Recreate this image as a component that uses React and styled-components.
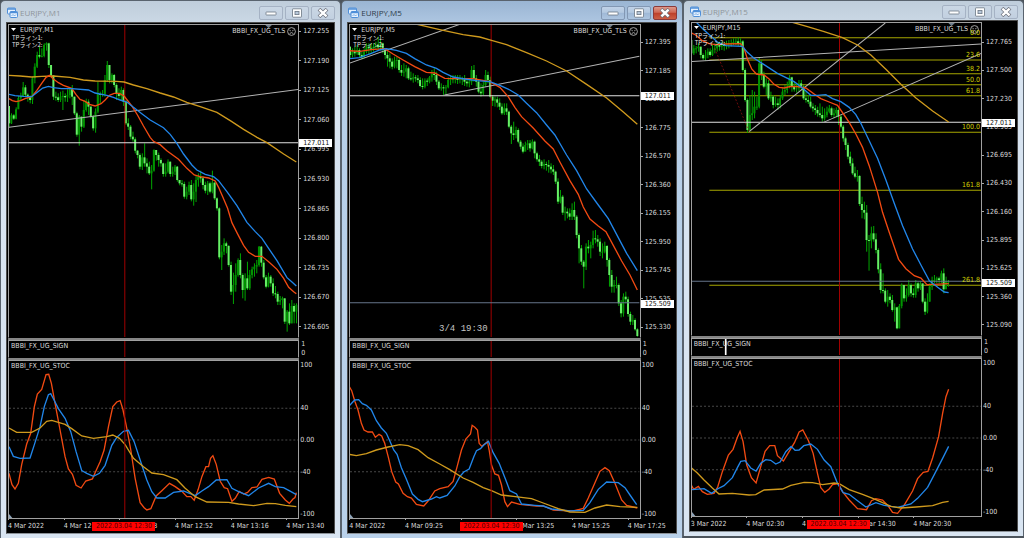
import React from 'react';
import styled, {createGlobalStyle} from 'styled-components';

const GlobalStyle = createGlobalStyle`
    * {
        box-sizing: border-box;
    }
    body {
        margin: 0;
        background: #4c545c;
        overflow: hidden;
    }
    h2, p {
        margin: 0;
        font-weight: normal;
    }
`

const Desktop = styled.main`
    display: flex;
    height: 100vh;
    font-family: "DejaVu Sans Condensed", "Noto Sans", "Noto Sans CJK JP", sans-serif;
    font-size: 7px;
    line-height: 10px;
    color: #dcdcdc;
`

const Window = styled.section`
    flex: 1;
    min-width: 0;
    display: flex;
    flex-direction: column;
    padding: 0 5px 4px;
    margin-bottom: ${({$raised}) => $raised ? 2 : 0}px;
    border: 1px solid #59636e;
    border-bottom: 0;
    border-radius: 5px 5px 0 0;
    background: ${({$active}) => $active
        ? 'linear-gradient(#9ab5d3, #b0c8e3 24px, #b7cfe8 70px, #b9d1ea)'
        : 'linear-gradient(#bfcddb, #ccd9e6 24px, #d7e3f0 70px, #d9e5f2)'};
`

const TitleBar = styled.header`
    flex: none;
    height: ${({$raised}) => $raised ? 19 : 21}px;
    padding: 2px 0 0 1px;
    display: flex;
    align-items: center;
    gap: 2px;

    h2 {
        flex: 1;
        font-family: "Open Sans", sans-serif;
        font-size: 8px;
        color: ${({$active}) => $active ? '#2f3c4a' : '#8f959b'};
    }
`

const WindowButtons = styled.div`
    display: flex;
    gap: 2px;
`

const WindowButton = styled.button`
    width: 24px;
    height: 14px;
    padding: 0;
    display: grid;
    place-items: center;
    border: 1px solid ${({$danger, $active}) => $danger ? '#8c3a3a' : $active ? '#8297b3' : '#a5b2c4'};
    border-radius: 2px;
    background: ${({$danger, $active}) => $danger
        ? 'linear-gradient(#dd9a8d, #cf6753 45%, #bd3f2a 50%, #cc5e44)'
        : $active
            ? 'linear-gradient(#c0d2e8, #b3c8e0 45%, #9fb8d6 50%, #adc5e0)'
            : 'linear-gradient(#cad7e5, #c2d0e0)'};
`

const Client = styled.div`
    flex: 1;
    min-height: 0;
    display: grid;
    grid-template-columns: minmax(0, 1fr) 35px;
    grid-template-rows: minmax(0, 314fr) 2px 18px 2px minmax(0, 159fr) 14px;
    padding: 1px 0 0 1px;
    border: 1px solid #4c4c4c;
    border-bottom-color: #8c9298;
    background: #000;
`

const Pane = styled.div`
    position: relative;
    min-height: 0;
    border: 1px solid #a0a0a0;
    border-bottom-color: ${({$last}) => $last ? '#a0a0a0' : '#000'};

    > svg {
        display: block;
        width: 100%;
        height: 100%;
    }
`

const Divider = styled.div`
    grid-column: 1;
    background: #858585;
`

const AxisGap = styled.div`
    grid-column: 2;
`

const PaneOverlay = styled.div`
    position: absolute;
    inset: 0 2px auto 2px;
    display: flex;
    align-items: flex-start;
    justify-content: space-between;
`

const Symbol = styled.div`
    p {
        padding-left: 1px;
        font-family: "Noto Sans CJK JP", sans-serif;
        font-size: 6px;
        line-height: 7px;
        color: #e4e4e4;
    }
`

const SymbolName = styled.div`
    display: flex;
    align-items: center;
    gap: 4px;
    height: 9px;
`

const Expert = styled.div`
    display: flex;
    align-items: center;
    gap: 2px;
    padding-top: 1px;
`

const StampNote = styled.span`
    position: absolute;
    right: 152px;
    bottom: 2px;
    font-family: "Liberation Mono", monospace;
    font-size: 9px;
    line-height: 12px;
    color: #c4c4c4;
`

const FibLabel = styled.span`
    position: absolute;
    right: 1px;
    top: ${({$top}) => $top}%;
    margin-top: -9px;
    line-height: 9px;
    color: #d2d200;
`

const PriceAxis = styled.div`
    position: relative;
    display: flex;
    flex-direction: column;
    justify-content: space-between;
    padding: ${({$pad}) => $pad} 0 6px;

    span {
        display: flex;
        align-items: center;
        gap: 2px;
        height: 10px;
    }
    span::before {
        content: "";
        width: 2px;
        height: 1px;
        background: #a8a8a8;
    }
`

const PriceTag = styled.strong`
    position: absolute;
    left: 0;
    right: 2px;
    top: ${({$top}) => $top}%;
    height: 8px;
    margin-top: -3px;
    padding-left: 4px;
    line-height: 8px;
    font-weight: normal;
    background: #fff;
    color: #111;
`

const SignAxis = styled.div`
    padding-left: 2px;
    line-height: 9px;
`

const LevelAxis = styled.div`
    display: flex;
    flex-direction: column;
    justify-content: space-between;
    padding-left: 1px;
`

const MidLevels = styled.div`
    display: flex;
    flex-direction: column;
    gap: 22px;
`

const TimeAxis = styled.div`
    position: relative;
    padding-right: 13px;
    display: grid;
    grid-template-columns: repeat(5, minmax(0, 1fr)) 0;
    white-space: nowrap;

    span {
        line-height: 13px;
    }
    span::before {
        content: "";
        display: block;
        width: 1px;
        height: 1px;
        background: #a8a8a8;
    }
`

const TimeTag = styled.strong`
    position: absolute;
    left: ${({$left}) => $left}%;
    top: 3px;
    width: 63px;
    height: 9px;
    line-height: 9px;
    text-align: center;
    font-weight: normal;
    background: #f00;
    color: #4a0000;
`

const RED = '#f24a12';
const BLUE = '#2186ea';
const GOLD = '#cf9a1d';
const CURSOR = '#a00000';

// every candle is [close, high, low]; it opens where the one before it closed
const M1 = [
    [370, 318, 382], [346, 340, 372], [356, 342, 360], [328, 322, 358], [294, 288, 326], [288, 278, 300],
    [262, 246, 290], [284, 255, 292], [292, 280, 305], [300, 286, 310], [235, 230, 312], [200, 190, 250],
    [165, 155, 204], [170, 140, 175], [168, 145, 172], [135, 130, 172], [130, 127, 152], [195, 128, 204],
    [226, 195, 232], [290, 226, 300], [292, 275, 302], [300, 280, 306], [290, 275, 306], [288, 272, 330],
    [292, 280, 305], [285, 268, 306], [268, 262, 295], [290, 255, 315], [340, 290, 345], [404, 335, 410],
    [350, 345, 437], [380, 350, 395], [330, 300, 384], [305, 296, 335], [320, 298, 345], [350, 318, 355],
    [385, 345, 392], [335, 325, 398], [282, 245, 340], [285, 275, 310], [282, 270, 290], [240, 225, 290],
    [195, 183, 245], [240, 195, 250], [225, 220, 250], [255, 222, 262], [280, 250, 300], [288, 265, 300],
    [270, 260, 300], [305, 265, 318], [370, 300, 375], [380, 355, 390], [410, 375, 418], [418, 395, 425],
    [452, 412, 460], [465, 450, 475], [500, 460, 508], [472, 460, 510], [490, 430, 500], [500, 475, 520],
    [520, 485, 525], [512, 495, 568], [450, 448, 515], [465, 450, 482], [480, 458, 500], [490, 475, 500],
    [522, 488, 530], [515, 490, 530], [485, 478, 520], [522, 485, 530], [515, 500, 530], [500, 495, 525],
    [540, 498, 545], [550, 540, 556], [552, 540, 560], [590, 545, 596], [575, 560, 598], [555, 545, 585],
    [598, 540, 604], [575, 550, 617], [540, 525, 606], [530, 520, 560], [535, 512, 548], [555, 528, 568],
    [572, 545, 580], [550, 543, 585], [575, 545, 580], [548, 512, 580], [595, 545, 600], [625, 592, 632],
    [772, 622, 778], [755, 735, 810], [730, 715, 765], [738, 725, 760], [795, 735, 800], [875, 785, 885],
    [855, 818, 912], [825, 790, 875], [780, 775, 830], [825, 760, 835], [870, 820, 895], [835, 820, 902],
    [865, 785, 870], [825, 810, 870], [808, 800, 835], [800, 790, 830], [795, 780, 820], [740, 738, 800],
    [788, 738, 800], [832, 780, 838], [860, 825, 865], [830, 818, 862], [850, 825, 860], [880, 835, 888],
    [882, 858, 895], [905, 875, 915], [900, 888, 915], [895, 890, 925], [965, 895, 972], [935, 930, 995],
    [970, 910, 975], [918, 900, 970], [935, 910, 970], [915, 910, 970],
];

const M5 = [
    [165, 140, 175], [155, 145, 172], [160, 140, 170], [150, 135, 165], [165, 145, 172], [172, 155, 178],
    [155, 145, 175], [140, 130, 160], [145, 130, 162], [150, 130, 160], [140, 130, 155], [135, 125, 150],
    [142, 110, 150], [130, 120, 150], [150, 128, 160], [165, 145, 178], [175, 150, 200], [185, 160, 205],
    [200, 175, 208], [182, 170, 205], [180, 170, 205], [210, 175, 218], [218, 195, 228], [215, 190, 230],
    [205, 195, 235], [235, 200, 240], [238, 215, 242], [232, 220, 248], [235, 225, 245], [240, 225, 250],
    [258, 232, 262], [260, 235, 268], [242, 235, 265], [245, 235, 258], [232, 228, 250], [222, 210, 245],
    [225, 205, 240], [245, 215, 255], [265, 240, 270], [262, 250, 272], [265, 255, 285], [262, 255, 283],
    [240, 232, 265], [235, 228, 255], [238, 225, 250], [235, 225, 250], [240, 225, 252], [235, 225, 250],
    [238, 230, 255], [245, 225, 258], [250, 235, 260], [245, 235, 262], [210, 198, 255], [235, 195, 245],
    [245, 225, 260], [275, 240, 280], [280, 250, 290], [255, 245, 285], [225, 210, 260], [240, 215, 250],
    [290, 230, 295], [302, 285, 318], [298, 290, 320], [308, 290, 322], [320, 295, 330], [340, 310, 345],
    [325, 310, 345], [335, 310, 345], [380, 332, 385], [400, 375, 432], [405, 365, 420], [390, 380, 415],
    [425, 385, 430], [440, 420, 448], [455, 430, 460], [435, 425, 452], [430, 420, 450], [445, 420, 455],
    [425, 418, 448], [460, 422, 475], [478, 455, 485], [485, 465, 498], [498, 480, 505], [492, 478, 508],
    [495, 485, 512], [500, 480, 518], [508, 490, 520], [515, 495, 525], [545, 512, 552], [605, 535, 612],
    [590, 570, 610], [638, 585, 645], [635, 620, 662], [640, 625, 655], [650, 625, 660], [630, 610, 660],
    [650, 605, 660], [705, 645, 715], [745, 700, 790], [785, 735, 795], [800, 780, 865], [740, 730, 810],
    [745, 720, 760], [735, 725, 775], [715, 692, 745], [718, 690, 730], [725, 705, 740], [755, 715, 768],
    [755, 730, 775], [738, 725, 760], [780, 735, 800], [825, 775, 860], [860, 810, 878], [855, 840, 878],
    [855, 830, 865], [910, 850, 918], [940, 900, 952], [890, 880, 950], [898, 875, 910], [942, 890, 950],
    [965, 935, 975], [960, 945, 975], [988, 955, 992], [1008, 985, 1010],
];

const M15 = [
    [160, 120, 170], [145, 135, 165], [145, 138, 160], [140, 130, 155], [165, 140, 175], [175, 160, 180],
    [165, 150, 182], [155, 145, 175], [165, 145, 170], [150, 135, 168], [145, 130, 160], [135, 125, 155],
    [140, 125, 152], [135, 125, 150], [138, 125, 152], [132, 122, 148], [130, 120, 145], [130, 118, 140],
    [126, 115, 135], [124, 115, 135], [130, 112, 138], [124, 115, 140], [210, 120, 215], [300, 205, 305],
    [390, 295, 398], [345, 285, 395], [340, 270, 360], [320, 275, 355], [320, 290, 330], [190, 172, 325],
    [225, 180, 240], [260, 215, 265], [250, 235, 285], [295, 240, 300], [290, 275, 305], [315, 285, 325],
    [310, 290, 320], [315, 295, 330], [295, 285, 325], [275, 265, 300], [270, 255, 285], [260, 245, 280],
    [232, 225, 265], [260, 230, 275], [268, 245, 275], [265, 250, 278], [250, 240, 275], [260, 240, 270],
    [295, 255, 300], [300, 275, 308], [305, 285, 312], [320, 290, 325], [325, 310, 335], [330, 315, 345],
    [340, 320, 350], [345, 310, 352], [355, 320, 365], [345, 325, 362], [335, 320, 352], [325, 315, 340],
    [345, 320, 350], [340, 325, 355], [330, 322, 352], [350, 325, 375], [380, 345, 385], [415, 375, 425],
    [435, 410, 450], [470, 428, 478], [490, 455, 498], [520, 475, 525], [530, 500, 535], [528, 510, 545],
    [612, 525, 618], [630, 590, 655], [638, 605, 658], [720, 615, 755], [722, 705, 812], [700, 680, 745],
    [718, 678, 725], [750, 700, 760], [808, 745, 820], [870, 790, 880], [872, 820, 880], [905, 865, 910],
    [890, 870, 920], [900, 880, 910], [930, 885, 935], [922, 910, 965], [985, 920, 988], [918, 912, 985],
    [855, 850, 925], [895, 855, 905], [885, 865, 905], [855, 840, 890], [880, 850, 890], [885, 865, 893],
    [850, 840, 893], [865, 845, 875], [850, 845, 870], [905, 852, 910], [935, 895, 945], [905, 880, 940],
    [860, 850, 905], [840, 830, 870], [840, 825, 850], [835, 830, 850], [840, 830, 850], [820, 812, 850],
    [868, 805, 880], [845, 830, 865], [845, 840, 860],
];

const charts = [
    {
        id: 'm1',
        title: 'EURJPY,M1',
        left: 27,
        top: 75,
        candleStart: 27,
        candles: M1,
        cursor: 374,
        lines: ['27,382 895,268'],
        levels: [{y: 428, label: '127.011', color: '#e0e0e0'}],
        averages: {
            gold: '27,226 60,228 95,231 125,229 160,228 210,232 250,240 285,243 350,244 372,246 400,255 440,266 480,279 520,291 560,307 600,320 650,337 690,362 730,388 770,412 800,428 850,462 888,486',
            red: '27,296 37,302 48,305 62,302 75,296 95,290 110,272 125,250 138,232 148,226 160,237 175,248 190,256 215,265 228,284 240,298 255,304 268,313 285,318 303,311 315,300 328,286 342,280 358,280 372,288 395,318 412,345 430,378 450,412 460,424 480,434 500,452 535,478 560,505 582,525 600,530 625,534 645,543 655,562 668,592 682,625 695,668 710,698 730,736 745,757 765,769 785,769 805,785 830,808 850,835 865,862 880,875 888,881',
            blue: '27,283 45,287 70,289 95,290 110,278 128,264 145,259 160,263 185,266 215,266 265,270 285,279 320,286 340,292 360,300 380,306 400,322 425,341 450,360 490,383 510,403 530,430 550,462 575,495 590,510 615,523 640,530 655,542 680,575 710,617 740,667 765,695 785,715 805,745 830,782 860,833 875,846 888,858',
        },
        axisPad: '2px',
        prices: ['127.255', '127.190', '127.125', '127.060', '126.995', '126.930', '126.865', '126.800', '126.735', '126.670', '126.605'],
        stoc: {
            red: '27,1420 36,1454 45,1467 55,1450 65,1394 80,1332 92,1300 103,1220 112,1182 125,1168 138,1124 146,1123 154,1150 165,1210 180,1290 195,1370 205,1407 217,1423 228,1456 243,1464 257,1443 277,1437 285,1418 300,1385 312,1350 325,1280 338,1220 350,1206 360,1202 368,1227 380,1285 392,1350 405,1435 420,1508 432,1523 440,1530 452,1526 468,1488 485,1472 508,1450 525,1460 545,1474 560,1490 572,1490 582,1501 594,1468 605,1430 617,1400 625,1400 631,1375 638,1367 648,1393 660,1444 672,1463 682,1466 695,1504 705,1495 717,1474 730,1482 742,1477 755,1463 770,1461 785,1438 805,1432 822,1437 838,1480 855,1500 867,1510 878,1497 884,1493 888,1478',
            blue: '27,1340 40,1369 60,1375 90,1374 103,1334 120,1280 133,1219 145,1184 152,1181 162,1200 175,1226 195,1255 212,1295 228,1355 245,1412 260,1420 280,1429 298,1420 315,1396 335,1336 350,1312 370,1294 385,1291 402,1325 420,1380 440,1440 455,1475 470,1494 495,1494 520,1477 550,1473 585,1487 605,1473 625,1460 648,1440 680,1439 695,1465 715,1475 745,1487 775,1464 805,1450 825,1460 850,1463 872,1475 888,1484',
            gold: '27,1284 50,1297 95,1297 120,1284 140,1264 155,1261 195,1273 215,1286 245,1308 280,1315 320,1310 338,1305 358,1315 375,1334 400,1375 430,1400 455,1419 490,1424 530,1439 555,1465 585,1490 620,1506 685,1507 715,1512 760,1517 800,1510 825,1511 855,1516 888,1520',
        },
        times: ['4 Mar 2022', '4 Mar 12:04', '4 Mar 12:28', '4 Mar 12:52', '4 Mar 13:16', '4 Mar 13:40'],
        timeTag: 29,
    },
    {
        id: 'm5',
        title: 'EURJPY,M5',
        active: true,
        left: 31,
        top: 75,
        candleStart: 31,
        candles: M5,
        cursor: 454,
        lines: ['28,190 360,73', '314,285 898,169'],
        levels: [
            {y: 287, label: '127.011', color: '#e0e0e0'},
            {y: 908, label: '125.509', color: '#66758a'},
        ],
        averages: {
            gold: '232,73 300,89 370,104 420,111 455,121 500,134 560,158 620,183 680,213 740,253 800,294 850,336 892,373',
            red: '28,152 60,154 95,149 135,146 160,162 190,180 225,200 260,217 285,219 315,235 360,236 400,236 450,245 480,262 505,290 525,322 545,350 580,384 615,423 640,447 660,486 690,542 715,583 730,621 750,657 775,678 798,695 820,736 845,783 870,825 892,870',
            blue: '28,176 60,173 95,160 120,150 140,146 170,151 200,160 225,176 260,195 290,205 310,217 340,231 375,237 410,242 450,245 480,256 510,270 535,285 560,310 590,338 620,375 645,405 680,465 710,512 740,567 775,615 805,656 835,713 860,760 892,812',
        },
        axisPad: '13px',
        prices: ['127.395', '127.185', '126.980', '126.775', '126.570', '126.360', '126.155', '125.950', '125.745', '125.535', '125.330'],
        note: '3/4 19:30',
        stoc: {
            red: '28,1158 36,1172 46,1205 55,1230 65,1270 73,1290 85,1296 98,1296 107,1312 118,1303 126,1308 135,1330 146,1372 156,1415 168,1446 176,1452 190,1480 203,1490 215,1494 230,1513 252,1518 265,1503 285,1473 300,1466 325,1460 340,1444 352,1400 365,1350 378,1317 392,1302 397,1276 405,1282 413,1290 418,1330 426,1339 443,1325 448,1350 455,1395 465,1422 476,1426 485,1455 495,1505 503,1520 515,1506 540,1513 590,1518 610,1518 640,1530 700,1533 730,1525 745,1494 765,1448 780,1414 795,1403 808,1412 825,1450 845,1500 860,1516 892,1524',
            blue: '28,1218 45,1200 57,1199 68,1211 80,1216 95,1230 110,1262 125,1284 140,1300 150,1322 162,1350 172,1363 185,1403 200,1438 218,1482 235,1498 248,1505 275,1497 290,1490 300,1494 322,1486 345,1458 360,1430 372,1416 388,1407 402,1370 410,1352 422,1346 432,1335 446,1324 460,1358 478,1390 497,1438 510,1472 530,1482 545,1512 585,1516 610,1518 635,1527 690,1533 730,1531 750,1508 775,1468 800,1446 835,1448 855,1463 870,1485 890,1514',
            gold: '28,1363 50,1367 80,1361 110,1350 145,1341 180,1334 205,1337 235,1349 265,1373 300,1392 330,1409 370,1434 400,1447 430,1463 455,1472 485,1485 520,1489 575,1496 610,1509 655,1526 690,1536 735,1537 765,1524 800,1515 840,1520 892,1522',
        },
        times: ['4 Mar 2022', '4 Mar 09:25', '4 Mar 11:25', '4 Mar 13:25', '4 Mar 15:25', '4 Mar 17:25'],
        timeTag: 38,
    },
    {
        id: 'm15',
        title: 'EURJPY,M15',
        raised: true,
        left: 29,
        top: 69,
        candleStart: 27,
        candles: M15,
        cursor: 471,
        lines: ['25,185 895,132', '200,395 608,69', '423,367 895,160'],
        trend: '97,145 200,395',
        levels: [
            {y: 367, label: '127.011', color: '#e0e0e0'},
            {y: 844, label: '125.509', color: '#66758a'},
        ],
        fibs: [[113, '0.0'], [180, '23.6'], [221, '38.2'], [254, '50.0'], [287, '61.8'], [397, '100.0'], [571, '161.8'], [856, '261.8']],
        averages: {
            gold: '330,67 375,80 425,95 480,113 525,135 565,165 610,208 655,253 700,294 750,333 798,366',
            red: '25,98 40,105 60,122 80,131 100,134 130,132 175,131 185,145 195,177 208,207 222,222 245,225 260,237 275,253 290,262 305,264 325,259 345,260 370,264 395,282 415,296 440,306 465,316 485,345 500,367 520,402 540,442 560,497 585,577 600,637 620,697 648,778 670,806 695,827 715,834 733,854 755,853 798,851',
            blue: '42,67 65,90 85,108 105,126 130,137 180,139 195,157 215,175 245,194 285,220 335,245 360,264 385,286 405,286 430,284 450,296 475,305 500,322 520,344 535,370 560,422 585,475 610,540 635,610 660,677 690,747 715,795 740,842 765,862 785,876 798,878',
        },
        axisPad: '15px',
        prices: ['127.765', '127.500', '127.230', '126.965', '126.695', '126.430', '126.160', '125.895', '125.625', '125.360', '125.090'],
        signal: 130,
        stoc: {
            red: '25,1452 34,1468 48,1459 60,1475 75,1483 95,1480 106,1461 120,1415 138,1365 152,1348 165,1312 173,1294 182,1325 193,1395 207,1433 221,1449 235,1400 248,1354 262,1337 277,1337 285,1367 303,1383 318,1358 336,1328 350,1296 361,1290 378,1322 392,1360 405,1420 415,1463 427,1477 440,1467 450,1454 468,1451 480,1475 500,1500 525,1526 552,1529 567,1502 580,1496 600,1500 617,1518 630,1537 645,1540 665,1515 690,1473 705,1436 722,1417 736,1414 750,1374 768,1310 780,1240 790,1190 798,1168',
            blue: '25,1469 65,1466 88,1480 105,1467 125,1457 150,1433 165,1403 175,1384 188,1382 205,1404 221,1413 235,1390 250,1379 265,1381 280,1392 293,1386 310,1355 326,1339 338,1351 350,1350 364,1337 385,1332 405,1348 425,1380 445,1400 465,1450 482,1478 500,1483 525,1502 550,1521 580,1508 605,1516 645,1522 685,1512 705,1495 735,1462 755,1424 780,1375 798,1339',
            gold: '25,1402 45,1419 65,1440 90,1464 110,1482 150,1480 200,1485 220,1484 245,1470 300,1467 325,1456 365,1447 390,1448 420,1454 455,1449 470,1451 500,1469 540,1483 580,1499 625,1519 655,1524 700,1521 750,1517 780,1507 798,1504',
        },
        times: ['3 Mar 2022', '4 Mar 02:30', '4 Mar 08:30', '4 Mar 14:30', '4 Mar 20:30'],
        timeTag: 40,
    },
];

const PLOT_WIDTH = 867;
const MAIN_HEIGHT = 936;
const STOC_HEIGHT = 471;

function ChartIcon() {
    return (
        <svg width="11" height="11" viewBox="0 0 11 11" fill="none" stroke="#4f8fd8" aria-hidden="true">
            <rect x="0.5" y="1" width="8" height="6" rx="1" fill="#e6f2ff" />
            <path d="M0.5 2H8.5" strokeWidth="1.5" />
            <rect x="3" y="4.5" width="7.5" height="6" rx="1" fill="#e6f2ff" />
            <path d="M3 5.5H10.5" strokeWidth="1.5" />
            <path d="M4.5 9L6 7.5L7.5 9L9 7.5" strokeWidth="0.7" />
        </svg>
    )
}

function MinimizeIcon() {
    return (
        <svg width="12" height="8" viewBox="0 0 12 8" aria-hidden="true">
            <rect x="1" y="3" width="10" height="3" rx="0.5" fill="#fff" stroke="#6b7683" strokeWidth="0.8" />
        </svg>
    )
}

function MaximizeIcon() {
    return (
        <svg width="12" height="10" viewBox="0 0 12 10" stroke="#6b7683" strokeWidth="0.8" aria-hidden="true">
            <rect x="1.5" y="0.8" width="9" height="8.4" rx="0.5" fill="#fff" />
            <rect x="4" y="3.4" width="4" height="3.2" fill="#b8c8da" />
        </svg>
    )
}

function CloseIcon() {
    return (
        <svg width="12" height="10" viewBox="0 0 12 10" fill="none" aria-hidden="true">
            <path d="M2 1.2L10 8.8M10 1.2L2 8.8" stroke="#6b6f7a" strokeWidth="3.8" />
            <path d="M2.4 1.6L9.6 8.4M9.6 1.6L2.4 8.4" stroke="#fff" strokeWidth="2.4" />
        </svg>
    )
}

function SadFace() {
    return (
        <svg width="9" height="9" viewBox="0 0 9 9" fill="none" stroke="#c8c8c8" strokeWidth="0.8" aria-hidden="true">
            <circle cx="4.5" cy="4.5" r="3.9" />
            <path d="M2.4 3.1L3.8 3.9M6.6 3.1L5.2 3.9M2.6 6.6Q4.5 4.6 6.4 6.6" />
        </svg>
    )
}

function Candles({data, start}) {
    return data.map(([close, high, low], i) => {
        const open = i ? data[i - 1][0] : high;
        const x = start + i * 7;
        const falling = close > open;
        return (
            <g key={i} fill={falling ? '#66f066' : '#009400'}>
                <rect x={x - 1} y={high} width="3" height={low - high} fill="#00a600" />
                <rect x={x - 3} y={Math.min(open, close)} width="6" height={Math.max(3, Math.abs(close - open))} />
            </g>
        )
    })
}

function PriceChart({chart}) {
    const right = chart.left + PLOT_WIDTH;
    return (
        <svg viewBox={`${chart.left} ${chart.top} ${PLOT_WIDTH} ${MAIN_HEIGHT}`} preserveAspectRatio="none" fill="none" strokeWidth="3">
            {chart.fibs?.map(([y]) => <line key={y} x1="81" x2={right} y1={y} y2={y} stroke="#a6a600" />)}
            <Candles data={chart.candles} start={chart.candleStart} />
            <line x1={chart.cursor} x2={chart.cursor} y1={chart.top} y2={chart.top + MAIN_HEIGHT} stroke={CURSOR} />
            {chart.levels.map(({y, color}) => <line key={y} x1={chart.left} x2={right} y1={y} y2={y} stroke={color} />)}
            {chart.lines.map((points) => <polyline key={points} points={points} stroke="#b4b4b4" />)}
            {chart.trend && <polyline points={chart.trend} stroke="#a01010" strokeWidth="2" strokeDasharray="6 5" />}
            <polyline points={chart.averages.gold} stroke={GOLD} strokeWidth="4" />
            <polyline points={chart.averages.red} stroke={RED} strokeWidth="4" />
            <polyline points={chart.averages.blue} stroke={BLUE} strokeWidth="4" />
            <path d={`M${right - 99} ${chart.top}h20l-10 9z`} fill="#71808f" />
        </svg>
    )
}

function StocChart({chart}) {
    const top = chart.raised ? 1077 : 1083;
    const right = chart.left + PLOT_WIDTH;
    return (
        <svg viewBox={`${chart.left} ${top} ${PLOT_WIDTH} ${STOC_HEIGHT}`} preserveAspectRatio="none" fill="none" strokeWidth="4">
            {[142, 237, 332].map((y) => (
                <line key={y} x1={chart.left} x2={right} y1={top + y} y2={top + y} stroke="#484848" strokeWidth="3" strokeDasharray="6 6" />
            ))}
            <polyline points={chart.stoc.red} stroke={RED} />
            <polyline points={chart.stoc.blue} stroke={BLUE} />
            <polyline points={chart.stoc.gold} stroke={GOLD} />
            <line x1={chart.cursor} x2={chart.cursor} y1={top} y2={top + STOC_HEIGHT} stroke={CURSOR} strokeWidth="3" />
            <path d={`M${chart.left} ${top + STOC_HEIGHT}v-12l10 12z`} fill="#8ea4ba" />
        </svg>
    )
}

function SignChart({chart}) {
    return (
        <svg viewBox={`${chart.left} 0 ${PLOT_WIDTH} 48`} preserveAspectRatio="none" strokeWidth="3">
            <line x1={chart.cursor} x2={chart.cursor} y1="0" y2="48" stroke={CURSOR} />
            {chart.signal && <line x1={chart.signal} x2={chart.signal} y1="0" y2="48" stroke="#fff" strokeWidth="5" />}
        </svg>
    )
}

function ChartWindow({chart}) {
    const {active, raised} = chart;
    const toPercent = (y) => (y - chart.top) / MAIN_HEIGHT * 100;
    return (
        <Window $active={active} $raised={raised} aria-labelledby={chart.id}>
            <TitleBar $active={active} $raised={raised}>
                <ChartIcon />
                <h2 id={chart.id}>{chart.title}</h2>
                <WindowButtons>
                    <WindowButton $active={active} aria-label="Minimize"><MinimizeIcon /></WindowButton>
                    <WindowButton $active={active} aria-label="Maximize"><MaximizeIcon /></WindowButton>
                    <WindowButton $active={active} $danger={active} aria-label="Close"><CloseIcon /></WindowButton>
                </WindowButtons>
            </TitleBar>
            <Client>
                <Pane>
                    <PriceChart chart={chart} />
                    <PaneOverlay>
                        <Symbol>
                            <SymbolName>
                                <svg width="5" height="3" viewBox="0 0 5 3" fill="#fff" aria-hidden="true"><path d="M0 0H5L2.5 3Z" /></svg>
                                <span>{chart.title}</span>
                            </SymbolName>
                            <p>TPライン1:</p>
                            <p>TPライン2:</p>
                        </Symbol>
                        <Expert>BBBI_FX_UG_TLS <SadFace /></Expert>
                    </PaneOverlay>
                    {chart.note && <StampNote>{chart.note}</StampNote>}
                    {chart.fibs?.map(([y, label]) => <FibLabel key={label} $top={toPercent(y)}>{label}</FibLabel>)}
                </Pane>
                <PriceAxis $pad={chart.axisPad}>
                    {chart.prices.map((price) => <span key={price}>{price}</span>)}
                    {chart.levels.map(({y, label}) => <PriceTag key={label} $top={toPercent(y)}>{label}</PriceTag>)}
                </PriceAxis>
                <Divider />
                <AxisGap />
                <Pane>
                    <SignChart chart={chart} />
                    <PaneOverlay>BBBI_FX_UG_SIGN</PaneOverlay>
                </Pane>
                <SignAxis>
                    <div>1</div>
                    <div>0</div>
                </SignAxis>
                <Divider />
                <AxisGap />
                <Pane $last>
                    <StocChart chart={chart} />
                    <PaneOverlay>BBBI_FX_UG_STOC</PaneOverlay>
                </Pane>
                <LevelAxis>
                    <div>100</div>
                    <MidLevels>
                        <div>40</div>
                        <div>0.00</div>
                        <div>-40</div>
                    </MidLevels>
                    <div>-100</div>
                </LevelAxis>
                <TimeAxis>
                    {chart.times.map((time) => <span key={time}>{time}</span>)}
                    <TimeTag $left={chart.timeTag}>2022.03.04 12:30</TimeTag>
                </TimeAxis>
            </Client>
        </Window>
    )
}

function App() {
    return (
        <Desktop>
            <GlobalStyle />
            {charts.map((chart) => <ChartWindow key={chart.id} chart={chart} />)}
        </Desktop>
    )
}

export default App
